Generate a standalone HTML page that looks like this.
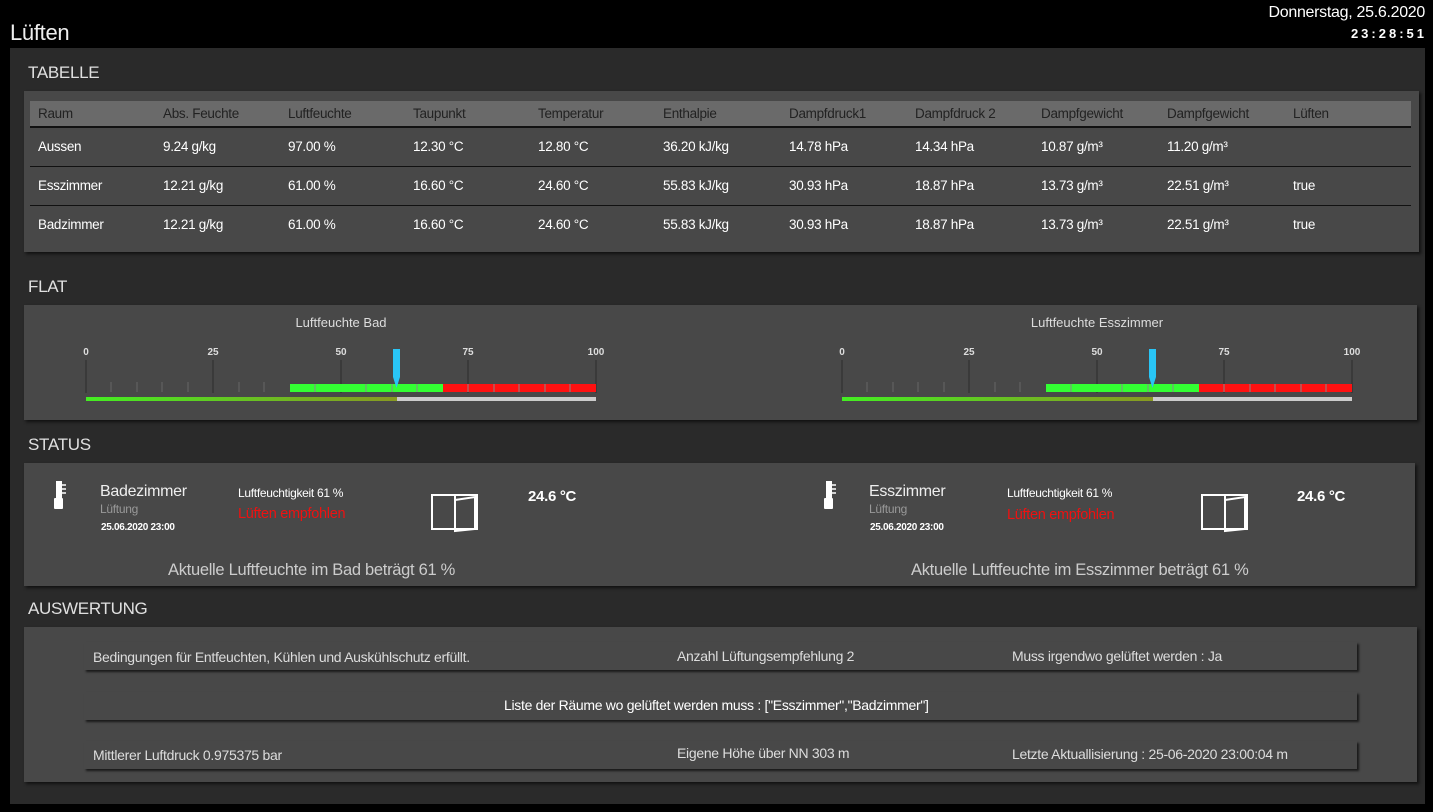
<!DOCTYPE html>
<html><head><meta charset="utf-8"><style>
*{margin:0;padding:0;box-sizing:border-box}
body{width:1433px;height:812px;background:#000;font-family:"Liberation Sans Narrow","Liberation Sans",sans-serif;color:#ddd;position:relative;overflow:hidden}
.a{position:absolute;white-space:nowrap;letter-spacing:-0.3px}
.outer{position:absolute;left:10px;top:48px;width:1415px;height:756px;background:#2a2a2a}
.panel{position:absolute;background:#484848;box-shadow:2px 2px 3px #111}
.h{font-size:17px;color:#e0e0e0}
table{border-collapse:collapse;position:absolute;left:6px;top:10px;width:1381px;font-size:13.5px;letter-spacing:-0.3px}
th{background:#6a6a6a;color:#222;font-weight:normal;text-align:left;height:26px;padding-left:8px;border-bottom:2px solid #111}
td{color:#fff;height:39px;padding-left:8px;border-bottom:1px solid #111}
tr:last-child td{border-bottom:none}
.box{position:absolute;left:60px;width:1273px;height:28px;background:#484848;box-shadow:2px 2px 2px #1a1a1a;font-size:14px;color:#ddd}
</style></head><body>
<div class="a" style="left:10px;top:20px;font-size:22px;color:#eee">Lüften</div>
<div class="a" style="right:8px;top:4px;font-size:16px;color:#fff;font-family:'Liberation Sans',sans-serif">Donnerstag, 25.6.2020</div>
<div class="a" style="right:6px;top:26px;font-size:13px;font-weight:bold;color:#fff;letter-spacing:3px;font-family:'Liberation Sans',sans-serif">23:28:51</div>
<div class="outer"></div>
<div class="a h" style="left:28px;top:63px">TABELLE</div>
<div class="panel" style="left:24px;top:91px;width:1395px;height:161px">
<table><tr><th style="width:125px">Raum</th><th style="width:125px">Abs. Feuchte</th><th style="width:125px">Luftfeuchte</th><th style="width:125px">Taupunkt</th><th style="width:125px">Temperatur</th><th style="width:126px">Enthalpie</th><th style="width:126px">Dampfdruck1</th><th style="width:126px">Dampfdruck 2</th><th style="width:126px">Dampfgewicht</th><th style="width:126px">Dampfgewicht</th><th>Lüften</th></tr>
<tr><td>Aussen</td><td>9.24 g/kg</td><td>97.00 %</td><td>12.30 °C</td><td>12.80 °C</td><td>36.20 kJ/kg</td><td>14.78 hPa</td><td>14.34 hPa</td><td>10.87 g/m³</td><td>11.20 g/m³</td><td></td></tr>
<tr><td>Esszimmer</td><td>12.21 g/kg</td><td>61.00 %</td><td>16.60 °C</td><td>24.60 °C</td><td>55.83 kJ/kg</td><td>30.93 hPa</td><td>18.87 hPa</td><td>13.73 g/m³</td><td>22.51 g/m³</td><td>true</td></tr>
<tr><td>Badzimmer</td><td>12.21 g/kg</td><td>61.00 %</td><td>16.60 °C</td><td>24.60 °C</td><td>55.83 kJ/kg</td><td>30.93 hPa</td><td>18.87 hPa</td><td>13.73 g/m³</td><td>22.51 g/m³</td><td>true</td></tr></table></div>
<div class="a h" style="left:28px;top:277px">FLAT</div>
<div class="panel" style="left:24px;top:305px;width:1393px;height:115px">
<svg width="1393" height="115" style="position:absolute;left:0;top:0" font-family="Liberation Sans,sans-serif">
<defs><linearGradient id="g" x1="0" x2="1"><stop offset="0" stop-color="#44ee22"/><stop offset="1" stop-color="#889922"/></linearGradient></defs>
<text x="317" y="22" fill="#ddd" font-size="13" text-anchor="middle">Luftfeuchte Bad</text>
<text x="1073" y="22" fill="#ddd" font-size="13" text-anchor="middle">Luftfeuchte Esszimmer</text>
<g id="ga">
<g fill="#ddd" font-size="10" font-weight="bold" text-anchor="middle"><text x="62" y="50">0</text><text x="189" y="50">25</text><text x="317" y="50">50</text><text x="444" y="50">75</text><text x="572" y="50">100</text></g>
<g stroke="#3a3a3a" stroke-width="2"><line x1="62" y1="55" x2="62" y2="88"/><line x1="189" y1="55" x2="189" y2="88"/><line x1="317" y1="55" x2="317" y2="88"/><line x1="444" y1="55" x2="444" y2="88"/><line x1="572" y1="55" x2="572" y2="88"/></g>
<g stroke="#666" stroke-width="1"><line x1="87" y1="77" x2="87" y2="87"/><line x1="113" y1="77" x2="113" y2="87"/><line x1="138" y1="77" x2="138" y2="87"/><line x1="164" y1="77" x2="164" y2="87"/><line x1="215" y1="77" x2="215" y2="87"/><line x1="240" y1="77" x2="240" y2="87"/></g>
<rect x="266" y="79" width="153" height="8" fill="#3f3"/><rect x="419" y="79" width="153" height="8" fill="#f11"/>
<g stroke="#888" stroke-width="1"><line x1="291" y1="79" x2="291" y2="87"/><line x1="342" y1="79" x2="342" y2="87"/><line x1="368" y1="79" x2="368" y2="87"/><line x1="393" y1="79" x2="393" y2="87"/><line x1="444" y1="79" x2="444" y2="87"/><line x1="470" y1="79" x2="470" y2="87"/><line x1="495" y1="79" x2="495" y2="87"/><line x1="521" y1="79" x2="521" y2="87"/><line x1="546" y1="79" x2="546" y2="87"/></g>
<rect x="62" y="92" width="311" height="4" fill="url(#g)"/><rect x="373" y="92" width="199" height="4" fill="#ccc"/>
<path d="M369 44h7v28l-3.5 11l-3.5-11z" fill="#29c5f6"/>
</g>
<use href="#ga" x="756"/>
</svg></div>
<div class="a h" style="left:28px;top:435px">STATUS</div>
<div class="panel" style="left:24px;top:463px;width:1391px;height:123px"></div>
<svg style="position:absolute;left:0;top:0" width="1433" height="600">
<g id="st" fill="none" stroke="#fff" stroke-width="2">
<rect x="56" y="481" width="6" height="20" fill="#fff" stroke="none"/><rect x="54" y="498" width="9" height="11" rx="1" fill="#fff" stroke="none"/>
<path d="M62 485h4M62 489h4M62 493h4" stroke-width="1.5"/>
<rect x="432" y="495" width="45" height="34"/><line x1="455" y1="495" x2="455" y2="529"/><path d="M455 500l20-3v32l-20 2z"/>
</g>
<use href="#st" x="770"/>
</svg>
<div class="a" style="left:100px;top:483px;font-size:16px;color:#eee">Badezimmer</div>
<div class="a" style="left:100px;top:502px;font-size:12px;color:#999">Lüftung</div>
<div class="a" style="left:101px;top:522px;font-size:10px;color:#fff;font-weight:bold">25.06.2020 23:00</div>
<div class="a" style="left:238px;top:486px;font-size:12px;color:#fff">Luftfeuchtigkeit 61 %</div>
<div class="a" style="left:238px;top:506px;font-size:14.5px;color:#e11">Lüften empfohlen</div>
<div class="a" style="left:528px;top:488px;font-size:15px;font-weight:bold;color:#fff">24.6 °C</div>
<div class="a" style="left:168px;top:561px;font-size:16.5px;color:#ccc">Aktuelle Luftfeuchte im Bad beträgt 61 %</div>
<div class="a" style="left:869px;top:483px;font-size:16px;color:#eee">Esszimmer</div>
<div class="a" style="left:869px;top:502px;font-size:12px;color:#999">Lüftung</div>
<div class="a" style="left:870px;top:522px;font-size:10px;color:#fff;font-weight:bold">25.06.2020 23:00</div>
<div class="a" style="left:1007px;top:486px;font-size:12px;color:#fff">Luftfeuchtigkeit 61 %</div>
<div class="a" style="left:1007px;top:507px;font-size:14.5px;color:#e11">Lüften empfohlen</div>
<div class="a" style="left:1297px;top:488px;font-size:15px;font-weight:bold;color:#fff">24.6 °C</div>
<div class="a" style="left:911px;top:561px;font-size:16.5px;color:#ccc">Aktuelle Luftfeuchte im Esszimmer beträgt 61 %</div>
<div class="a h" style="left:28px;top:599px">AUSWERTUNG</div>
<div class="panel" style="left:24px;top:627px;width:1393px;height:155px">
<div class="box" style="top:15px"><span class="a" style="left:9px;top:7px">Bedingungen für Entfeuchten, Kühlen und Auskühlschutz erfüllt.</span><span class="a" style="left:593px;top:6px">Anzahl Lüftungsempfehlung 2</span><span class="a" style="left:928px;top:6px">Muss irgendwo gelüftet werden : Ja</span></div>
<div class="box" style="top:65px"><span class="a" style="left:420px;top:5px;color:#fff">Liste der Räume wo gelüftet werden muss : ["Esszimmer","Badzimmer"]</span></div>
<div class="box" style="top:114px"><span class="a" style="left:9px;top:6px">Mittlerer Luftdruck 0.975375 bar</span><span class="a" style="left:593px;top:4px">Eigene Höhe über NN 303 m</span><span class="a" style="left:928px;top:5px">Letzte Aktuallisierung : 25-06-2020 23:00:04 m</span></div>
</div>
</body></html>
